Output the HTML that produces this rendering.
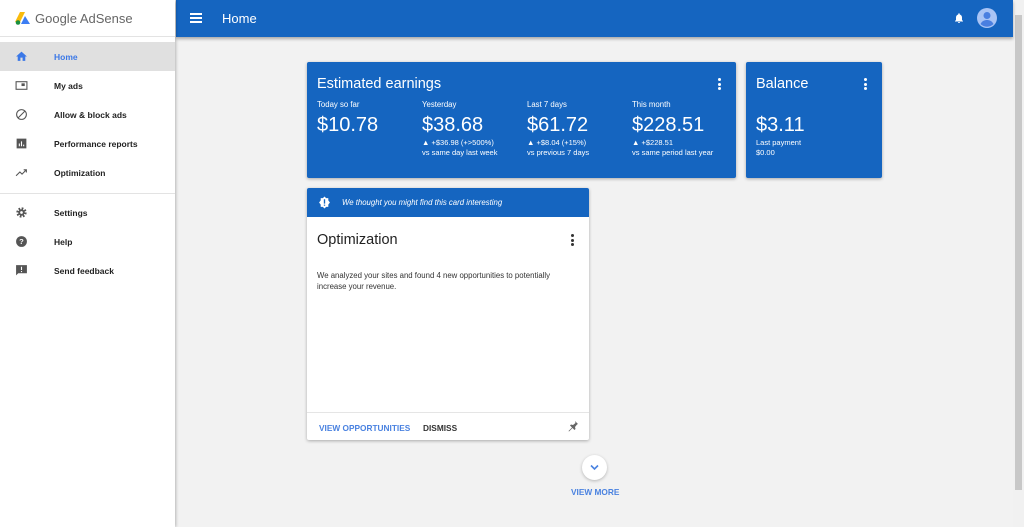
<!DOCTYPE html>
<html><head><meta charset="utf-8"><style>
*{box-sizing:border-box;margin:0;padding:0}
body{width:1024px;height:527px;overflow:hidden;background:#f2f2f2;font-family:"Liberation Sans",Arial,sans-serif;position:relative}
.side{position:absolute;left:0;top:0;width:175px;height:527px;background:#fff;box-shadow:1px 0 3px rgba(0,0,0,.25);z-index:2}
.logo{height:37px;border-bottom:1px solid #e3e3e3;display:flex;align-items:center;padding-left:15px;font-size:13px;color:#666}
.nav{position:absolute;left:0;width:175px;height:29px;display:flex;align-items:center;font-size:8.5px;color:#222;font-weight:bold}
.nav .ic{position:absolute;left:15px;top:8px;width:13px;height:13px}
.nav span{position:absolute;left:54px}
.hdr{position:absolute;left:176px;top:0;width:837px;height:37px;background:#1565c0;box-shadow:0 2px 3px rgba(0,0,0,.3);z-index:1;color:#fff}
.card{position:absolute;background:#fff;box-shadow:0 1px 3px rgba(0,0,0,.3);border-radius:2px}
.blue{background:#1565c0;color:#fff}
.lbl{position:absolute;font-size:7.8px;color:#fff}
.big{position:absolute;font-size:20px;color:#fff;top:52px}
.sm{position:absolute;font-size:7.5px;color:#fff;line-height:9.5px}
.dots{position:absolute;width:3px}
.dots i{display:block;width:3px;height:3px;border-radius:50%;background:currentColor;margin-bottom:1.5px}
</style></head><body>
<div class="side">
 <div class="logo"><svg width="16" height="13" viewBox="0 0 16 13" style="margin-right:4px"><path d="M5 0h5L5 10H0z" fill="#f9bb0d"/><path d="M10 4l-4 8h9z" fill="#3d7ef3"/><circle cx="3" cy="10.5" r="2.3" fill="#1b8f3f"/></svg>Google AdSense</div>
 <div class="nav" style="top:42px;background:#e0e0e0;color:#3b78e7"><svg class="ic" viewBox="0 0 24 24"><path d="M10 20v-6h4v6h5v-8h3L12 3 2 12h3v8z" fill="#3b78e7"/></svg><span>Home</span></div>
 <div class="nav" style="top:71px"><svg class="ic" viewBox="0 0 24 24"><rect x="2" y="5" width="20" height="14" fill="none" stroke="#555" stroke-width="2"/><rect x="12" y="8" width="6" height="5" fill="#555"/></svg><span>My ads</span></div>
 <div class="nav" style="top:100px"><svg class="ic" viewBox="0 0 24 24"><circle cx="12" cy="12" r="9" fill="none" stroke="#555" stroke-width="2"/><path d="M6 18L18 6" stroke="#555" stroke-width="2"/></svg><span>Allow &amp; block ads</span></div>
 <div class="nav" style="top:129px"><svg class="ic" viewBox="0 0 24 24"><rect x="3" y="3" width="18" height="18" fill="#555"/><path d="M8 17v-5M12 17V8M16 17v-3" stroke="#fff" stroke-width="2"/></svg><span>Performance reports</span></div>
 <div class="nav" style="top:158px"><svg class="ic" viewBox="0 0 24 24"><path d="M2 18l7-7 4 4 8-8M16 7h5v5" fill="none" stroke="#555" stroke-width="2"/></svg><span>Optimization</span></div>
 <div style="position:absolute;top:193px;left:0;width:175px;border-top:1px solid #e3e3e3"></div>
 <div class="nav" style="top:198px"><svg class="ic" viewBox="0 0 24 24"><circle cx="12" cy="12" r="7" fill="none" stroke="#555" stroke-width="5" stroke-dasharray="3 2.5"/><circle cx="12" cy="12" r="6" fill="#555"/><circle cx="12" cy="12" r="2.5" fill="#fff"/></svg><span>Settings</span></div>
 <div class="nav" style="top:227px"><svg class="ic" viewBox="0 0 24 24"><circle cx="12" cy="12" r="10" fill="#555"/><text x="12" y="17" font-size="14" font-weight="bold" fill="#fff" text-anchor="middle" font-family="Liberation Sans">?</text></svg><span>Help</span></div>
 <div class="nav" style="top:256px"><svg class="ic" viewBox="0 0 24 24"><path d="M2 2h20v15H6l-4 4z" fill="#555"/><path d="M12 5v6M12 13v2" stroke="#fff" stroke-width="2"/></svg><span>Send feedback</span></div>
</div>
<div class="hdr">
 <div style="position:absolute;left:14px;top:13px;width:12px"><div style="height:1.6px;background:#fff;margin-bottom:2.6px"></div><div style="height:1.6px;background:#fff;margin-bottom:2.6px"></div><div style="height:1.6px;background:#fff"></div></div>
 <div style="position:absolute;left:46px;top:11px;font-size:13px">Home</div>
 <svg style="position:absolute;left:777px;top:11px" width="12" height="14" viewBox="0 0 24 24"><path d="M12 22a2 2 0 002-2h-4a2 2 0 002 2zm6-6v-5c0-3-2-5.5-4.5-6V4a1.5 1.5 0 00-3 0v1C8 5.5 6 8 6 11v5l-2 2v1h16v-1z" fill="#fff"/></svg>
 <svg style="position:absolute;left:801px;top:8px" width="20" height="20" viewBox="0 0 20 20"><circle cx="10" cy="10" r="10" fill="#a9c4f5"/><circle cx="10" cy="7.5" r="3.5" fill="#4a7fe0"/><path d="M3.5 16c1.5-3 4-4 6.5-4s5 1 6.5 4a9 9 0 01-13 0z" fill="#4a7fe0"/></svg>
</div>
<div style="position:absolute;left:1013px;top:0;width:11px;height:527px;background:#f1f1f1"><div style="position:absolute;left:2px;top:15px;width:7px;height:475px;background:#c8c8c8"></div></div>

<div class="card blue" style="left:307px;top:62px;width:429px;height:116px">
 <div style="position:absolute;left:10px;top:14px;font-size:14.5px">Estimated earnings</div>
 <div class="dots" style="left:411px;top:16px;color:#fff"><i></i><i></i><i></i></div>
 <div class="lbl" style="left:10px;top:38px">Today so far</div><div class="big" style="left:10px">$10.78</div>
 <div class="lbl" style="left:115px;top:38px">Yesterday</div><div class="big" style="left:115px">$38.68</div>
 <div class="sm" style="left:115px;top:76px">▲ +$36.98 (+&gt;500%)<br>vs same day last week</div>
 <div class="lbl" style="left:220px;top:38px">Last 7 days</div><div class="big" style="left:220px">$61.72</div>
 <div class="sm" style="left:220px;top:76px">▲ +$8.04 (+15%)<br>vs previous 7 days</div>
 <div class="lbl" style="left:325px;top:38px">This month</div><div class="big" style="left:325px">$228.51</div>
 <div class="sm" style="left:325px;top:76px">▲ +$228.51<br>vs same period last year</div>
</div>
<div class="card blue" style="left:746px;top:62px;width:136px;height:116px">
 <div style="position:absolute;left:10px;top:14px;font-size:14.5px">Balance</div>
 <div class="dots" style="left:118px;top:16px;color:#fff"><i></i><i></i><i></i></div>
 <div class="big" style="left:10px">$3.11</div>
 <div class="sm" style="left:10px;top:76px">Last payment<br>$0.00</div>
</div>
<div class="card" style="left:307px;top:188px;width:282px;height:252px">
 <div style="height:29px;background:#1565c0;border-radius:2px 2px 0 0;position:relative">
  <svg style="position:absolute;left:11px;top:8px" width="13" height="13" viewBox="0 0 24 24"><path d="M12 1l3 3h4v4l3 4-3 4v4h-4l-3 3-3-3H5v-4l-3-4 3-4V4h4z" fill="#fff"/><path d="M12 6v8M12 16v2" stroke="#1565c0" stroke-width="2.5"/></svg>
  <div style="position:absolute;left:35px;top:10px;font-size:7.8px;font-style:italic;color:#fff">We thought you might find this card interesting</div>
 </div>
 <div style="position:absolute;left:10px;top:44px;font-size:14.5px;color:#222">Optimization</div>
 <div class="dots" style="left:264px;top:46px;color:#333"><i></i><i></i><i></i></div>
 <div style="position:absolute;left:10px;top:82px;font-size:7.8px;color:#333;line-height:11px">We analyzed your sites and found 4 new opportunities to potentially<br>increase your revenue.</div>
 <div style="position:absolute;left:0;top:224px;width:282px;border-top:1px solid #e5e5e5"></div>
 <div style="position:absolute;left:12px;top:235px;font-size:8.3px;font-weight:bold;color:#4a82e0">VIEW OPPORTUNITIES</div>
 <div style="position:absolute;left:116px;top:235px;font-size:8.3px;font-weight:bold;color:#333">DISMISS</div>
 <svg style="position:absolute;left:260px;top:232px" width="12" height="12" viewBox="0 0 24 24"><path d="M16 2l6 6-2 1-4 5 1 4-2 2-4-4-7 7-1-1 7-7-4-4 2-2 4 1 5-4z" fill="#666"/></svg>
</div>
<div style="position:absolute;left:582px;top:455px;width:25px;height:25px;border-radius:50%;background:#fff;box-shadow:0 1px 3px rgba(0,0,0,.25)"><svg style="position:absolute;left:8px;top:9px" width="9" height="7" viewBox="0 0 9 7"><path d="M1 1.5l3.5 3.5 3.5-3.5" fill="none" stroke="#4a82e0" stroke-width="1.6"/></svg></div>
<div style="position:absolute;left:571px;top:487px;font-size:8.3px;font-weight:bold;color:#4a82e0">VIEW MORE</div>
</body></html>
